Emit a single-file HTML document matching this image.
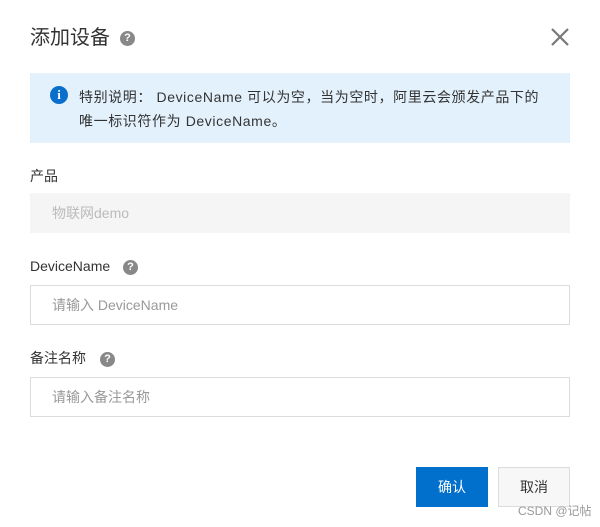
<!DOCTYPE html>
<html><head><meta charset="utf-8"><style>
*{margin:0;padding:0;box-sizing:border-box}
body{width:600px;height:527px;background:#fff;font-family:"Liberation Sans","Noto Sans CJK SC",sans-serif;color:#333;position:relative;overflow:hidden}
.a{position:absolute}
.q{position:absolute;width:15px;height:15px;border-radius:50%;background:#888;color:#fff;font-size:11px;font-weight:bold;text-align:center;line-height:15px}
.lbl{position:absolute;left:30px;font-size:14px;color:#333;line-height:20px}
.inp{position:absolute;left:30px;width:540px;height:40px;border:1px solid #dcdcdc;font-size:14px;color:#999;padding-left:21px;line-height:38px}
</style></head><body>
<div class="a" style="left:30px;top:24px;font-size:20px;line-height:28px;color:#333">添加设备</div>
<div class="q" style="left:120px;top:31px">?</div>
<svg class="a" style="left:551px;top:28px" width="18" height="18" viewBox="0 0 18 18"><path d="M1 1L17 17M17 1L1 17" stroke="#777" stroke-width="2.2"/></svg>
<div class="a" style="left:30px;top:73px;width:540px;height:70px;background:#e3f1fc"></div>
<div class="a" style="left:50px;top:86px;width:18px;height:18px;border-radius:50%;background:#0a6fcc;color:#fff;font:bold 13px/18px 'Liberation Serif',serif;text-align:center">i</div>
<div class="a" style="left:79px;top:85px;width:490px;font-size:14px;line-height:24px;color:#333;white-space:nowrap;letter-spacing:0.6px">特别说明： DeviceName 可以为空，当为空时，阿里云会颁发产品下的<br>唯一标识符作为 DeviceName。</div>
<div class="lbl" style="top:166px">产品</div>
<div class="a" style="left:30px;top:193px;width:540px;height:40px;background:#f5f5f5;font-size:14px;color:#bbb;padding-left:22px;line-height:40px">物联网demo</div>
<div class="lbl" style="top:256px">DeviceName</div>
<div class="q" style="left:123px;top:260px">?</div>
<div class="inp" style="top:285px">请输入 DeviceName</div>
<div class="lbl" style="top:348px">备注名称</div>
<div class="q" style="left:100px;top:352px">?</div>
<div class="inp" style="top:377px">请输入备注名称</div>
<div class="a" style="left:416px;top:467px;width:72px;height:40px;background:#0070cc;color:#fff;font-size:14px;text-align:center;line-height:40px">确认</div>
<div class="a" style="left:498px;top:467px;width:72px;height:40px;background:#f7f7f7;border:1px solid #dcdcdc;color:#333;font-size:14px;text-align:center;line-height:38px">取消</div>
<div class="a" style="left:518px;top:503px;font-size:12px;color:#999;line-height:16px">CSDN @记帖</div>
</body></html>
